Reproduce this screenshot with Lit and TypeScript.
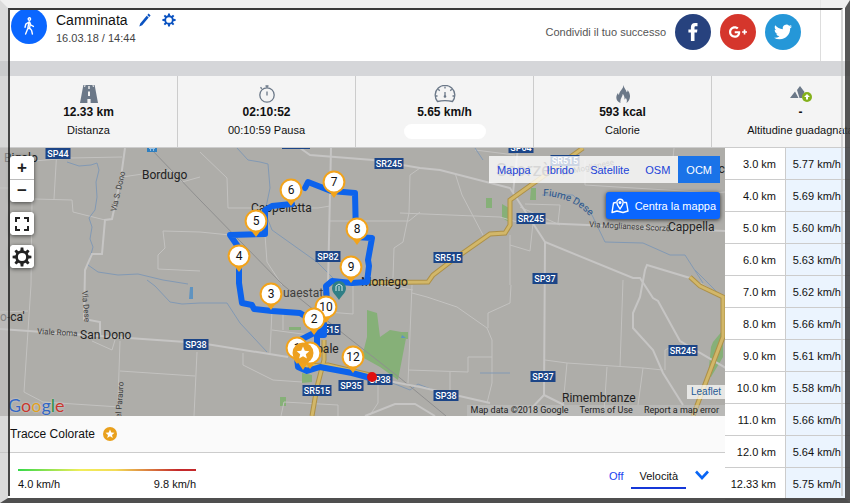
import { LitElement, html, svg, css } from "lit";
import { customElement, state } from "lit/decorators.js";
import { classMap } from "lit/directives/class-map.js";

const SANS = css`"Liberation Sans", Arial, sans-serif`;

const gear = (size: number) => html`<svg width=${size} height=${size} viewBox="0 0 20 20" aria-hidden="true">
  <circle cx="10" cy="10" r="5.4" fill="none" stroke="currentColor" stroke-width="2.6" />
  ${[0, 45, 90, 135, 180, 225, 270, 315].map(
    (a) => svg`<path d="M8.2 4.6 8.7.6h2.6l.5 4z" fill="currentColor" transform="rotate(${a} 10 10)" />`
  )}
</svg>`;

const icons = {
  walk: html`<svg width="12" height="18" viewBox="0 0 12 18" fill="none" stroke="#fff" stroke-width="1.4" stroke-linecap="round" stroke-linejoin="round">
    <circle cx="6.4" cy="2" r="1.2" />
    <path d="M6 5 4.8 11.5 2.6 17M6 5l-3.2 2.2-.8 3M6.6 5l1.2 3 2.6 1.4M7.2 7l-.6 4 2 2.4.8 3.6M4.8 11.5h2" />
  </svg>`,
  pencil: html`<svg width="12" height="14" viewBox="0 0 12 14" fill="currentColor"><path d="M9.6.6 11.6 2.4 10.3 3.9 8.3 2.1zM7.7 2.8 9.7 4.6 3.2 12.2.3 13.6 1.2 10.4z" /></svg>`,
  facebook: html`<svg width="10" height="18" viewBox="0 0 10 18" fill="#fff"><path d="M9.5 0v3.2H8c-1.1 0-1.5.4-1.5 1.4v1.8h2.9L9 9.6H6.500V18H2.900V9.600H.4V6.400H2.900V4.200C2.900 1.500 4.500 0 7.100 0z" /></svg>`,
  gplus: html`<svg width="18" height="18" viewBox="0 0 24 24" fill="#fff"><path d="M7.635 10.909v2.619h4.335c-.173 1.125-1.31 3.295-4.331 3.295-2.604 0-4.731-2.16-4.731-4.823 0-2.662 2.122-4.822 4.728-4.822 1.485 0 2.479.633 3.045 1.178l2.073-1.994c-1.33-1.245-3.056-1.995-5.115-1.995C3.412 4.365 0 7.785 0 12s3.414 7.635 7.635 7.635c4.41 0 7.332-3.098 7.332-7.461 0-.501-.054-.885-.12-1.265H7.635zm16.365 0h-2.183V8.726h-2.183v2.183h-2.182v2.184h2.184v2.189h2.189v-2.189H24z" /></svg>`,
  twitter: html`<svg width="18" height="18" viewBox="0 0 24 24" fill="#fff"><path d="M23.953 4.57a10 10 0 01-2.825.775 4.958 4.958 0 002.163-2.723c-.951.555-2.005.959-3.127 1.184a4.92 4.92 0 00-8.384 4.482C7.69 8.095 4.067 6.13 1.64 3.162a4.822 4.822 0 00-.666 2.475c0 1.71.87 3.213 2.188 4.096a4.904 4.904 0 01-2.228-.616v.06a4.923 4.923 0 003.946 4.827 4.996 4.996 0 01-2.212.085 4.936 4.936 0 004.604 3.417 9.867 9.867 0 01-6.102 2.105c-.39 0-.779-.023-1.17-.067a13.995 13.995 0 007.557 2.209c9.053 0 13.998-7.496 13.998-13.985 0-.21 0-.42-.015-.63A9.935 9.935 0 0024 4.590z" /></svg>`,
  road: html`<svg width="18" height="18" viewBox="0 0 18 18"><path d="M3.400 0h11.200L18 18H0z" fill="#6b7888" /><path d="M8.300 1h1.400v3H8.300zM8 6.500h2V11H8zM7.400 14h3.200v4H7.400z" fill="#f3f3f3" /><path d="M5 0 4.600 2M13 0l.4 2" stroke="#f3f3f3" /></svg>`,
  stopwatch: html`<svg width="18" height="18" viewBox="0 0 18 18" fill="none" stroke="#6b7888" stroke-width="1.300"><circle cx="9" cy="10" r="7.200" /><path d="M9 6.500v4M9 .5v2.300M7.500 1h3M2.500 2.300 3.800 3.800" /></svg>`,
  gauge: html`<svg width="22" height="18" viewBox="0 0 22 18" fill="none" stroke="#6b7888" stroke-width="1.300"><path d="M3.500 16.500a9.800 9.800 0 1 1 15 0q-7.500-1.800-15 0z" /><path d="M11 7v4.500M11 1.500v2M4.300 4.300l1.400 1.400M17.700 4.300l-1.400 1.400M1.500 11h2M18.500 11h2" /><circle cx="11" cy="11.500" r=".7" /></svg>`,
  flame: html`<svg width="14" height="18" viewBox="0 0 14 18"><path fill="#6b7888" d="M7.500 0C8 3.500 10.200 4.500 10.700 7.300 11.500 6.800 11.700 6 11.600 5c3.700 4.500 3 10-1.100 13 .8-2.500.3-4-.8-5.300-.2 1-.6 1.500-1.200 1.800C8.700 12 8 10 6.700 9c0 2.800-3 4.500-2.200 9C-.2 16.500-.8 11.500 2 8c.1 1 .4 1.700 1 2.100C3 6 7.300 4.500 7.500 0z" /></svg>`,
  ascent: html`<svg width="24" height="18" viewBox="0 0 24 18"><path fill="#6b7888" d="M1 13 6 6.500 9.500 13zM8 5 11 1l4.500 6-2.500 6h-2.500z" /><circle cx="18" cy="12" r="5" fill="#84b11c" /><path d="M18 9 15 12h2v2.500h2V12h2z" fill="#fff" /></svg>`,
  fullscreen: html`<svg width="16" height="16" viewBox="0 0 16 16" fill="none" stroke="#222" stroke-width="2"><path d="M2 6V2h4M10 2h4v4M14 10v4h-4M6 14H2v-4" /></svg>`,
  center: html`<svg width="18" height="16" viewBox="0 0 18 16" fill="none" stroke="#fff" stroke-width="1.400" stroke-linejoin="round"><path d="M5 4.500 2.500 5 1 14.500l5-1.500 6 1.500 5-1.500-1.500-8.500L13 4.500" /><path d="M9 11C7 8 5.800 6.500 5.800 4.500a3.200 3.200 0 0 1 6.400 0C12.200 6.500 11 8 9 11z" /><circle cx="9" cy="4.500" r=".8" /></svg>`,
  star: html`<svg width="14" height="14" viewBox="0 0 14 14"><circle cx="7" cy="7" r="7" fill="#e9a01c" /><path fill="#fff" d="M7 2.500 8.300 5.600 11.500 5.800 9 7.900 9.800 11 7 9.300 4.200 11 5 7.900 2.500 5.800 5.700 5.600z" /></svg>`,
  chevron: html`<svg width="14" height="10" viewBox="0 0 14 10" fill="none" stroke="#0a66f5" stroke-width="2.600"><path d="M1 1.500 7 8l6-6.500" /></svg>`,
};

const minorRoads = [
  "M0 188h20M32 200l-1 85-7 107 19 10 77 5",
  "M10 163l60-5 52-1M57 148l-3 51M35 199l37 1 1 12 32 8",
  "M122 177l48-7 12 12 18-5M200 232l-37-1 2 17-7 7v14l42 2",
  "M200 152l27 26 1 30 90 0 12-2M330 221l79 0 11-9M420 168l-10 7-1 38-6 29-9 6-1 30",
  "M200 232l30 3M265 235l2 27 15 23M272 310l-2 43M243 353v12l30 15 29 2M272 330l38 5M283 312v18M353 284v30l-25-2",
  "M281 416l3-14 54 3v12M380 285l33 5M455 173l7 22 21 40M400 213l100 4 17 5M560 205l-2 18M525 204l35 1M510 235v50M510 245l20 6 3-28",
  "M412 285l-4 98M412 293l15 4 30 10 30 21 5 12v43l-5 20M488 328v-15l22-10 1-18M623 280l-3 87M545 360l22 3 76 5 20 2M567 363l-4 42M607 367l-3 45M643 368l-5 37",
  "M408 370l60 2v-15h24M450 372v18M475 150l40 5M585 160v25l130 8 10-1M674 148l-1 10M665 370v-20l8-4M378 385v18l-8 12",
  "M28 311l-28 1M120 371l75 5M197 352l-3 64M100 321v16M92 341l20 9 3-10M120 341l-2 60M560 225l-40-18",
];
const mainRoads = [
  "M125 148l-4 29-9 42-7 1-3 34h-10l-7 16-1 49 16 3v15",
  "M331 148l-3 137",
  "M300 148l10 7 63 5 47 8 20 2 70 18 13 20 22 34 88 36 7 0 13 20 5 3 22 40 56 33",
  "M640 297l-7 16v15l20 22 10 23 20 32M640 297l5-27 2-5 43 13 35 20",
  "M0 329l200 14 88 14M328 365l39 12 53 10 70 16M545 242l-1 153-17 18M544 395l20 10",
  "M517 222l70 3 138 6M518 148l-5 45M365 416l30-12 20 0 20 12",
];
const rivers = [
  "M67 162l12 4 12-1 6-2 2 7-3 12 1 15-2 13-6 8 3 9-2 12 3 8-5 18 10 7 20 3 20-1 25 6 25 4",
  "M147 280l8 6 15 16 12 2 18-1 27 0 13 20 27 29",
  "M237 148l11 12 12 2 8 2 2 24-5 24 7 18 45 32 16 16",
  "M475 148l8 12M542 195l31 0 19 20 13 27 38 1 27 12h15l18 28M695 270l25 25",
  "M345 370l25 12 20 0 20 8 8-6 25 10M480 373h30",
];
const yellowRoads = [
  "M583 148l-66 47-7 5v25l-5 8-15 1-40 28-17 13-5 7-98 1",
  "M324 340v20l-7 27-5 29",
  "M300 366l28-1 42 10",
  "M690 277l10 9 23 11v40l-30 79",
];
const greens = [
  "M367 310l10 3 3 24 10-7 17 3-9 47-18-13-18-10 5-20z",
  "M302 373l10 2v7l-10 1z",
  "M280 397h6v9h-6z",
  "M531 188h5v12h-6z",
  "M502 204l7 4v14l-7-4z",
  "M486 198h6v10h-6z",
  "M400 332h8v7h-8z",
  "M713 342l10-12v27l-12 20-3 0 3-30z",
  "M289 327h12v3h-12z",
];
const route = [
  "M371 378l-19-5-32-6-13 4-9-4-1-9",
  "M302 339l12-6 10 0M317 344v-13h7l0-11 3-17-1-17 6-5 20 2 15-1 2-16-1-6 4-22-16-1-1-44-24-2-23-9-3 6",
  "M317 345v-10h7",
  "M292 204l-20 2-7 4v24l-35 1 9 13v35l3 20 10 2 2 4 18 2 28 2 8 5",
];

const places: [string, number, number][] = [
  ["Bordugo", 142, 179],
  ["Cappelletta", 251, 212],
  ["Moniego", 361, 286],
  ["San Dono", 80, 339],
  ["Cappella", 668, 231],
  ["Rimembranze", 562, 402],
  ["Bigolo", 4, 162],
  ["o-ca'", 0, 321],
  ["Spale", 309, 353],
  ["uc", 712, 173],
];
const shields: [string, number, number][] = [
  ["SP44", 58, 153],
  ["SR245", 389, 163],
  ["SP64", 521, 147],
  ["SR515", 565, 160],
  ["SR245", 531, 218],
  ["SR515", 448, 257],
  ["SP37", 545, 278],
  ["SP82", 328, 256],
  ["SR515", 326, 329],
  ["SP38", 196, 344],
  ["SR515", 317, 390],
  ["SP35", 351, 385],
  ["SP38", 380, 379],
  ["SP37", 543, 376],
  ["SP38", 446, 395],
  ["SR245", 683, 350],
];
const pins: [string, number, number][] = [
  ["7", 334, 182],
  ["6", 291, 190],
  ["5", 256, 221],
  ["8", 357, 229],
  ["4", 239, 256],
  ["9", 351, 267],
  ["3", 271, 294],
  ["10", 326, 307],
  ["2", 314, 319],
  ["1", 297, 348],
  ["", 310, 353],
  ["12", 353, 357],
];

@customElement("track-map")
export class TrackMap extends LitElement {
  @state() private layer = "OCM";

  static styles = css`
    :host { display: block; position: relative; height: 268px; overflow: hidden; background: #aeada9; font-family: ${SANS}; font-size: 11px; }
    button { font: inherit; border: 0; padding: 0; cursor: pointer; }
    a { color: inherit; text-decoration: none; }
    .canvas { display: block; width: 100%; height: 100%; font-family: Roboto, sans-serif; }
    .minor { fill: none; stroke: #c3c2c0; stroke-width: 1; }
    .main { fill: none; stroke: #c6c5c4; stroke-width: 2; }
    .river { fill: none; stroke: #8299b4; stroke-width: 1; }
    .rail { fill: none; stroke: #8f8f8f; stroke-width: 1; }
    .casing { fill: none; stroke: #ad9048; stroke-width: 5; }
    .yellow { fill: none; stroke: #d2b769; stroke-width: 3; }
    .green { fill: #86b078; }
    .route { fill: none; stroke: #0d63ec; stroke-width: 6; stroke-linejoin: round; stroke-linecap: round; }
    .place { font-size: 12px; fill: #222; }
    .town { font-size: 18px; fill: #444; }
    .street { font-size: 8px; fill: #3b3b3b; }
    .water { font-size: 10px; fill: #2a568c; }
    .shield { fill: #1c4587; }
    .code { font-size: 9px; font-weight: 500; fill: #fff; text-anchor: middle; }
    .num { font-size: 12px; fill: #111; text-anchor: middle; }
    .tools { position: absolute; top: 8px; left: 10px; display: flex; flex-direction: column; gap: 10px; }
    .group { display: flex; flex-direction: column; border-radius: 4px; background: #fff; box-shadow: 0 1px 4px rgba(0, 0, 0, 0.6); overflow: hidden; }
    .tool { box-sizing: border-box; width: 24px; height: 23px; display: flex; align-items: center; justify-content: center; background: #fff; color: #222; font-size: 17px; font-weight: bold; line-height: 22px; }
    .group .tool + .tool { border-top: 1px solid #bbb; }
    .right { position: absolute; top: 8px; right: 5px; display: flex; flex-direction: column; align-items: flex-end; gap: 9px; }
    .layers { display: flex; background: rgba(255, 255, 255, 0.78); }
    .layer { height: 27px; padding: 0 8px; background: none; color: #1b43d8; }
    .layer.on { background: #1a73e8; color: #fff; }
    .center { display: flex; align-items: center; gap: 6px; height: 27px; padding: 0 4px 0 5px; border-radius: 3px; background: #0a66ff; color: #fff; box-shadow: 0 1px 4px rgba(0, 0, 0, 0.7); }
    .google { position: absolute; left: 8px; bottom: 0; font: 18px/22px Lato, sans-serif; text-shadow: 0 0 2px #ddd; }
    .b { color: #3367c4; } .r { color: #c8372d; } .y { color: #dfa01f; } .g { color: #2c8f45; }
    .credits { position: absolute; right: 0; bottom: 0; display: flex; flex-direction: column; align-items: flex-end; gap: 6px; }
    .leaflet { padding: 0 4px; background: rgba(255, 255, 255, 0.7); color: #1f5a96; font-size: 10px; line-height: 14px; }
    .terms { display: flex; gap: 11px; padding: 0 6px 0 4px; background: rgba(200, 200, 200, 0.45); color: #222; font: 9px/11px Roboto, sans-serif; }
  `;

  private lines(kind: string, paths: string[]) {
    return paths.map((d) => svg`<path class=${kind} d=${d} />`);
  }

  render() {
    return html`
      <svg class="canvas" viewBox="0 148 725 268" preserveAspectRatio="xMinYMin slice" role="img" aria-label="Percorso">
        <defs><path id="stream" d="M543 196Q575 197 594 221" /></defs>
        ${this.lines("green", greens)} ${this.lines("minor", minorRoads)} ${this.lines("river", rivers)}
        <path class="rail" d="M150 148l50 52 83 85 62 50 55 43 46 38" />
        ${this.lines("main", mainRoads)} ${this.lines("casing", yellowRoads)} ${this.lines("yellow", yellowRoads)}
        <path d="M190 287h3v12h-4zM402 335l4 3h-5z" fill="#5f93c0" />
        ${shields.map(([t, x, y]) => {
          const w = t.length > 4 ? 29 : 25;
          return svg`<rect class="shield" x=${x - w / 2} y=${y - 5} width=${w} height="11" /><text class="code" x=${x} y=${y + 4}>${t}</text>`;
        })}
        <rect class="shield" x="282" y="140" width="28" height="9" />
        <rect x="147" y="143" width="10" height="9" fill="#2f7fc0" /><path d="M149 148h6M150 150h1M153 150h1" stroke="#fff" />
        <text class="town" x="496" y="176">Scorzè</text>
        <text class="street" transform="translate(116 212) rotate(-77)">Via S. Dono</text>
        <text class="street" transform="translate(82 291) rotate(85)">Via Dese</text>
        <text class="street" transform="translate(121 418) rotate(-86)">el Parauro</text>
        <text class="street" transform="translate(37 334) rotate(3)">Viale Roma</text>
        <text class="street" transform="translate(589 227) rotate(3)">Via Moglianese Scorzè</text>
        <text class="street" transform="translate(561 176) rotate(-12)">Via Moglianese</text>
        <text class="water"><textPath href="#stream">Fiume Dese</textPath></text>
        ${places.map(([t, x, y]) => svg`<text class="place" x=${x} y=${y}>${t}</text>`)}
        <text class="place" x="283" y="297" fill-opacity=".8">uaestate</text>
        ${this.lines("route", route)}
        <path d="M339 300c-3-5-7-7-7-12a7 7 0 0 1 14 0c0 5-4 7-7 12z" fill="#2f7f86" />
        <path d="M336 291v-5l3-2 3 2v5M339 286v5" fill="none" stroke="#d8e8e8" />
        <circle cx="372" cy="377" r="5" fill="#e01010" />
        ${pins.map(
          ([t, x, y]) => svg`<g transform="translate(${x} ${y})">
            <path d="M-6 8 0 16 6 8z" fill="#f2a31b" /><circle r="10.400" fill="#fff" stroke="#f2a31b" stroke-width="2" />
            <text class="num" y="4">${t}</text></g>`
        )}
        <g transform="translate(303 353)">
          <path d="M-6 8 0 17 6 8z" fill="#f2a31b" /><circle r="10.500" fill="#eda01f" />
          <path fill="#fff" d="M0-6.500 1.800-2.200 6.300-1.800 2.800 1.200 3.900 5.600 0 3.200-3.900 5.600-2.800 1.200-6.300-1.800-1.800-2.200z" />
        </g>
      </svg>

      <div class="tools">
        <div class="group">
          <button class="tool" aria-label="Ingrandisci">+</button>
          <button class="tool" aria-label="Riduci">−</button>
        </div>
        <div class="group"><button class="tool" aria-label="Schermo intero">${icons.fullscreen}</button></div>
        <div class="group"><button class="tool" aria-label="Impostazioni">${gear(20)}</button></div>
      </div>

      <div class="right">
        <div class="layers">
          ${["Mappa", "Ibrido", "Satellite", "OSM", "OCM"].map(
            (name) => html`<button class=${classMap({ layer: true, on: name === this.layer })} @click=${() => (this.layer = name)}>${name}</button>`
          )}
        </div>
        <button class="center">${icons.center}<span>Centra la mappa</span></button>
      </div>

      <a class="google" href="#" aria-label="Google"><span class="b">G</span><span class="r">o</span><span class="y">o</span><span class="b">g</span><span class="g">l</span><span class="r">e</span></a>
      <div class="credits">
        <a class="leaflet" href="#">Leaflet</a>
        <div class="terms"><span>Map data ©2018 Google</span><a href="#">Terms of Use</a><a href="#">Report a map error</a></div>
      </div>
    `;
  }
}

const stats = [
  { icon: icons.road, value: "12.33 km", label: "Distanza" },
  { icon: icons.stopwatch, value: "02:10:52", label: "00:10:59 Pausa" },
  { icon: icons.gauge, value: "5.65 km/h", label: "" },
  { icon: icons.flame, value: "593 kcal", label: "Calorie" },
  { icon: icons.ascent, value: "-", label: "Altitudine guadagnata" },
];

const splits = [
  ["3.0", "5.77"],
  ["4.0", "5.69"],
  ["5.0", "5.60"],
  ["6.0", "5.63"],
  ["7.0", "5.62"],
  ["8.0", "5.66"],
  ["9.0", "5.61"],
  ["10.0", "5.58"],
  ["11.0", "5.66"],
  ["12.0", "5.64"],
  ["12.33", "5.75"],
];

@customElement("app-root")
export class AppRoot extends LitElement {
  @state() private track = "Velocità";

  static styles = css`
    :host { display: block; position: relative; min-height: 100vh; overflow: hidden; background: #fff; color: #111; font: 11px/16px ${SANS}; }
    button { font: inherit; color: inherit; border: 0; padding: 0; background: none; cursor: pointer; }
    svg { display: block; }
    h1, p { margin: 0; }
    .header { display: flex; height: 61px; padding-right: 29px; }
    .bar { flex: 1; display: flex; align-items: flex-start; padding: 8px 19px 0 11px; border-right: 1px solid #ddd; }
    .avatar { display: grid; place-items: center; width: 36px; height: 36px; border-radius: 50%; background: #0a66ff; }
    .about { flex: 1; padding: 2px 0 0 9px; }
    .name { display: flex; align-items: center; gap: 11px; height: 20px; color: #0b53c1; }
    .name h1 { font-size: 14px; font-weight: normal; color: #111; }
    .date { color: #444; }
    .share { display: flex; align-items: center; gap: 9px; padding-top: 6px; color: #555; }
    .social { display: grid; place-items: center; width: 36px; height: 36px; border-radius: 50%; }
    .facebook { background: #27427e; } .gplus { background: #d5362c; } .twitter { background: #2597d8; }
    .band { height: 15px; background: #d5d6d9; }
    .stats { display: grid; grid-template-columns: repeat(5, minmax(178px, 1fr)); height: 71px; background: #f4f4f4; border-bottom: 1px solid #ccc; overflow: hidden; }
    .stat { display: flex; flex-direction: column; align-items: center; padding-top: 9px; white-space: nowrap; border-right: 1px solid #ccc; }
    .value { font-size: 12px; font-weight: bold; line-height: 18px; }
    .blank { width: 82px; height: 15px; margin-top: 3px; border-radius: 8px; background: #fff; }
    .label { line-height: 18px; }
    .body { display: grid; grid-template-columns: 1fr 125px; }
    .tracks { display: flex; align-items: center; gap: 8px; height: 36px; padding-left: 10px; background: #fafafa; border-bottom: 1px solid #ccc; font-size: 12px; }
    .legend { display: flex; justify-content: space-between; padding: 12px 16px 0 18px; }
    .scale { width: 178px; padding-top: 4px; }
    .ramp { height: 2px; background: linear-gradient(90deg, #35d84a, #f1ee5a 35%, #f3dc58 55%, #c4292b 90%, #c4292b); }
    .ends { display: flex; justify-content: space-between; padding-top: 4px; line-height: 18px; }
    .modes { display: flex; align-items: flex-start; }
    .mode { height: 24px; padding: 0 8px; color: #1b43f0; border-bottom: 2px solid transparent; }
    .mode.on { color: #111; border-color: #1537d8; }
    .more { padding: 5px 0 0 9px; }
    .splits { width: 100%; border-collapse: collapse; background: linear-gradient(90deg, #fff 60px, #ebf4fe 60px); }
    .splits th, .splits td { height: 31px; padding: 0 9px 0 0; font-weight: normal; text-align: right; white-space: nowrap; border-bottom: 1px solid #ccc; }
    .splits th { width: 51px; border-right: 1px solid #ccc; }
    .frame { position: absolute; inset: 0; pointer-events: none; border-style: solid; border-width: 8px 5px 5px 8px; border-color: rgba(235, 235, 235, 0.7) rgba(60, 60, 60, 0.86) rgba(60, 60, 60, 0.9) rgba(195, 195, 195, 0.6); }
    .edge { position: absolute; inset: 0 2px 2px 0; border-style: solid; border-width: 2px 2px 0 2px; border-color: #3a3a3a rgba(200, 200, 200, 0.7) transparent rgba(45, 45, 45, 0.88); }
  `;

  render() {
    return html`
      <header class="header">
        <div class="bar">
          <div class="avatar">${icons.walk}</div>
          <div class="about">
            <div class="name">
              <h1>Camminata</h1>
              <button aria-label="Modifica">${icons.pencil}</button>
              <button aria-label="Impostazioni">${gear(14)}</button>
            </div>
            <p class="date">16.03.18 / 14:44</p>
          </div>
          <div class="share">
            <span>Condividi il tuo successo</span>
            <a class="social facebook" href="#" aria-label="Facebook">${icons.facebook}</a>
            <a class="social gplus" href="#" aria-label="Google+">${icons.gplus}</a>
            <a class="social twitter" href="#" aria-label="Twitter">${icons.twitter}</a>
          </div>
        </div>
      </header>
      <div class="band"></div>
      <section class="stats">
        ${stats.map(
          (s) => html`<div class="stat">
            ${s.icon}
            <span class="value">${s.value}</span>
            ${s.label ? html`<span class="label">${s.label}</span>` : html`<span class="blank"></span>`}
          </div>`
        )}
      </section>
      <main class="body">
        <div>
          <track-map></track-map>
          <div class="tracks"><span>Tracce Colorate</span>${icons.star}</div>
          <div class="legend">
            <div class="scale">
              <div class="ramp"></div>
              <div class="ends"><span>4.0 km/h</span><span>9.8 km/h</span></div>
            </div>
            <div class="modes">
              ${["Off", "Velocità"].map(
                (m) => html`<button class=${classMap({ mode: true, on: m === this.track })} @click=${() => (this.track = m)}>${m}</button>`
              )}
              <button class="more" aria-label="Altro">${icons.chevron}</button>
            </div>
          </div>
        </div>
        <table class="splits">
          <tbody>
            ${splits.map(([km, v]) => html`<tr><th scope="row">${km} km</th><td>${v} km/h</td></tr>`)}
          </tbody>
        </table>
      </main>
      <div class="frame"><div class="edge"></div></div>
    `;
  }
}
